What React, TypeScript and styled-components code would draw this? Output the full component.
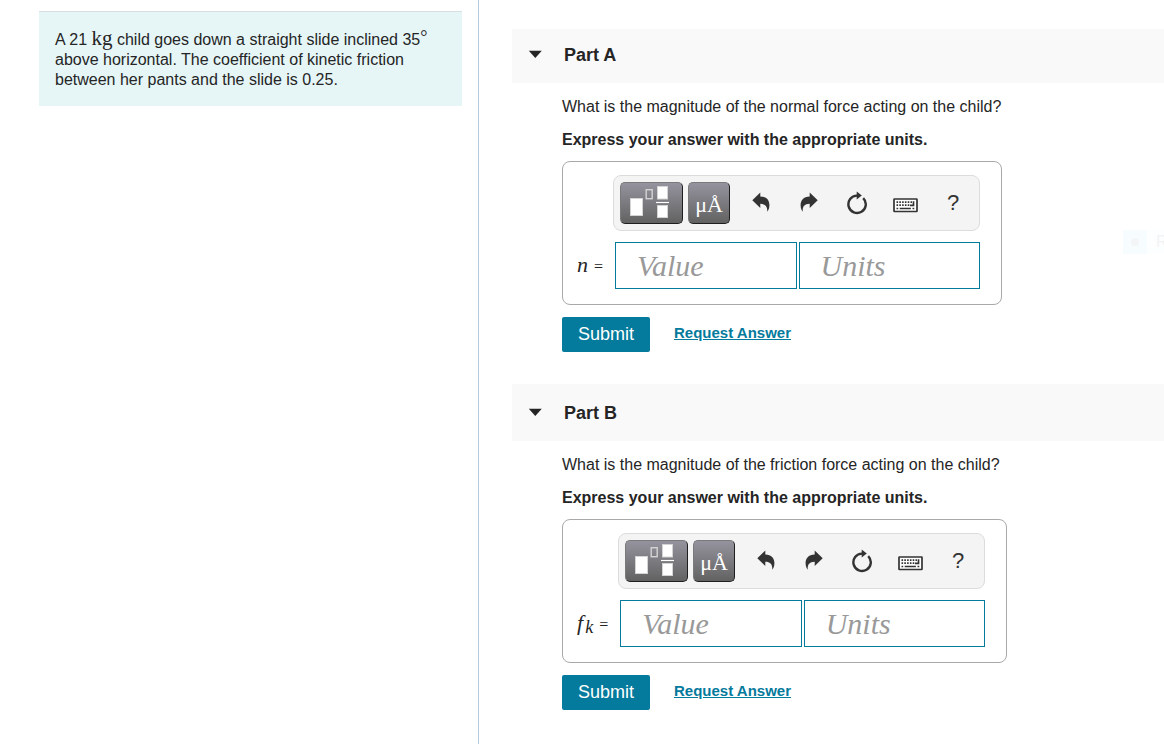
import React from "react";
import styled, { createGlobalStyle } from "styled-components";

const GlobalStyle = createGlobalStyle`
  *, *::before, *::after { box-sizing: border-box; }
  body {
    margin: 0;
    background: #fff;
    color: #252525;
    font: 16px/20px "Liberation Sans", Arial, sans-serif;
    overflow-x: hidden;
  }
  p { margin: 0; }
`;

const Page = styled.div`
  display: grid;
  grid-template-columns: minmax(0, 479fr) minmax(0, 685fr);
  min-height: 100vh;
`;

const ProblemPane = styled.aside`
  border-right: 1px solid #b8cbdc;
  padding: 11px 16px 0 39px;
`;

const ProblemCard = styled.div`
  border-top: 1px solid #d6e0e0;
  background: #e6f6f7;
  padding: 18px 16px 16px;
`;

const Unit = styled.span`
  font: 21px/16px "Liberation Serif", "Times New Roman", serif;
`;

const Degree = styled.span`
  font: 18px/12px "Liberation Serif", "Times New Roman", serif;
  vertical-align: 2px;
`;

const AnswerPane = styled.main`
  position: relative;
  padding: 29px 0 32px 33px;
`;

const Part = styled.section`
  & + & { margin-top: 32px; }
`;

const PartHeader = styled.header<{ $compact?: boolean }>`
  background: #f9f9f9;
  padding: ${(p) => (p.$compact ? 16 : 19)}px 16px 18px;
`;

const PartToggle = styled.button`
  display: flex;
  align-items: center;
  gap: 22px;
  border: 0;
  padding: 0;
  background: none;
  color: inherit;
  font: inherit;
`;

const PartTitle = styled.h2`
  margin: 0;
  font-size: 18px;
  line-height: 20px;
`;

const PartBody = styled.div`
  display: flex;
  flex-direction: column;
  align-items: flex-start;
  padding: 14px 16px 0 50px;
`;

const Instruction = styled.p`
  margin-top: 13px;
  font-weight: bold;
`;

const AnswerBox = styled.form`
  display: grid;
  grid-template-columns: auto auto;
  align-items: center;
  row-gap: 11px;
  column-gap: 10px;
  margin-top: 11px;
  border: 1px solid #a9a9a9;
  border-radius: 8px;
  padding: 13px 21px 15px 14px;
`;

const Toolbar = styled.div`
  grid-column: 2;
  display: flex;
  align-items: center;
  height: 56px;
  border: 1px solid #dcdcdc;
  border-radius: 8px;
  background: #f4f4f4;
  padding: 0 2px 0 6px;
`;

const PaletteButton = styled.button<{ $wide?: boolean }>`
  display: flex;
  align-items: center;
  justify-content: center;
  width: ${(p) => (p.$wide ? 63 : 42)}px;
  height: 42px;
  margin-right: ${(p) => (p.$wide ? 5 : 7)}px;
  border: 1px solid;
  border-color: #7a7a7a #1f1f1f #1f1f1f #7a7a7a;
  border-radius: 5px;
  padding: ${(p) => (p.$wide ? 0 : 4)}px 0 0;
  background: linear-gradient(#95939e, #626262);
  color: #fff;
  font: 22px/24px "Liberation Serif", "Times New Roman", serif;
`;

const ToolButton = styled.button`
  display: flex;
  align-items: center;
  justify-content: center;
  width: 48px;
  height: 42px;
  border: 0;
  padding: 0;
  background: none;
  color: #333;
  font: 22px/24px "Liberation Sans", Arial, sans-serif;
`;

const VariableLabel = styled.label`
  grid-column: 1;
  font: italic 22px/24px "Liberation Serif", "Times New Roman", serif;
  white-space: nowrap;
`;

const Subscript = styled.sub`
  margin-left: 2px;
  font-size: 18px;
  line-height: 0;
  vertical-align: -3px;
`;

const Equals = styled.span`
  margin-left: 6px;
  font: 16px/24px "Liberation Serif", "Times New Roman", serif;
`;

const Fields = styled.div`
  display: flex;
  gap: 2px;
  padding-left: 2px;
`;

const Field = styled.input`
  flex: 1 1 0;
  min-width: 0;
  width: 181px;
  height: 47px;
  border: 1px solid #047a9c;
  border-radius: 0;
  padding: 1px 21px 0;
  background: #fff;
  color: #252525;
  font: italic 30px/32px "Liberation Serif", "Times New Roman", serif;
  &::placeholder { color: #999; opacity: 1; }
`;

const Actions = styled.div`
  display: flex;
  align-items: center;
  gap: 24px;
  margin-top: 12px;
`;

const SubmitButton = styled.button`
  height: 35px;
  border: 0;
  border-radius: 2px;
  padding: 0 16px 2px;
  background: #047a9c;
  color: #fff;
  font: 18px/20px "Liberation Sans", Arial, sans-serif;
`;

const RequestLink = styled.a`
  color: #047a9c;
  font-size: 15px;
  font-weight: bold;
  line-height: 20px;
  padding-bottom: 4px;
`;

const FadingBadge = styled.div`
  position: absolute;
  top: 230px;
  right: 0;
  display: flex;
  width: 41px;
  height: 24px;
  overflow: hidden;
  background: #fcfeff;
  color: #f3f3f3;
  line-height: 24px;
`;

const BadgeDot = styled.span`
  display: flex;
  flex: 0 0 24px;
  align-items: center;
  justify-content: center;
  margin-right: 9px;
  background: #f7fcff;
  &::before {
    content: "";
    width: 8px;
    height: 8px;
    border-radius: 50%;
    background: #f3f5f6;
  }
`;

const CaretIcon = () => (
  <svg width="14" height="10" viewBox="0 0 14 10" aria-hidden="true">
    <path d="M.8.8h13L7.3 8z" fill="#252525" />
  </svg>
);

const TemplateIcon = () => (
  <svg width="43" height="34" viewBox="0 0 43 34" fill="#fff" stroke="#d4d4d4" aria-hidden="true">
    <rect x=".5" y="12.5" width="12" height="17" />
    <rect x="16.2" y="3.7" width="6" height="9" fill="none" strokeWidth="1.4" />
    <rect x="27.5" y=".5" width="10" height="12.5" />
    <rect x="27.5" y="19.5" width="10" height="12" />
    <path d="M26 16.5h13" stroke="#fff" strokeWidth="1.2" />
  </svg>
);

const UndoIcon = () => (
  <svg width="24" height="24" viewBox="0 0 24 24" fill="currentColor" aria-hidden="true">
    <path d="M3.3 9.2 11.3 1.5v4C17.6 5.5 20.6 9.6 20.4 14.5c-.1 2.8-1 5-2.2 6.2.5-5.2-1.8-7.9-6.9-7.9v4.2z" />
  </svg>
);

const RedoIcon = () => (
  <svg width="24" height="24" viewBox="0 0 24 24" fill="currentColor" aria-hidden="true">
    <path d="M20.7 9.2 12.7 1.5v4C6.4 5.5 3.4 9.6 3.6 14.5c.1 2.8 1 5 2.2 6.2-.5-5.2 1.8-7.9 6.9-7.9v4.2z" />
  </svg>
);

const ResetIcon = () => (
  <svg width="24" height="24" viewBox="0 0 24 24" aria-hidden="true">
    <path d="M18.2 7.1A8.7 8.7 0 1 1 12 4.6" fill="none" stroke="currentColor" strokeWidth="2.4" />
    <path d="M11.7.5 16.8 4.5 11.7 8.5z" fill="currentColor" />
  </svg>
);

const KeyboardIcon = () => (
  <svg width="25" height="24" viewBox="0 0 25 24" fill="none" stroke="currentColor" aria-hidden="true">
    <rect x="1" y="8" width="23" height="12.5" rx=".5" fill="#fff" strokeWidth="1.7" />
    <path d="M3.5 11.2H19M3.5 14.2H17.5" strokeWidth="1.7" strokeDasharray="1.6 1.2" />
    <path d="M20.5 10.3v4H17" strokeWidth="1.7" />
    <path d="M3.5 17.6h1.7M6.7 17.6h11.2M19.5 17.6h1.8" strokeWidth="1.5" />
  </svg>
);

interface QuestionProps {
  id: string;
  title: string;
  question: string;
  variable: React.ReactNode;
  compact?: boolean;
}

function Question({ id, title, question, variable, compact }: QuestionProps) {
  return (
    <Part>
      <PartHeader $compact={compact}>
        <PartToggle type="button" aria-expanded="true">
          <CaretIcon />
          <PartTitle>{title}</PartTitle>
        </PartToggle>
      </PartHeader>
      <PartBody>
        <p>{question}</p>
        <Instruction>Express your answer with the appropriate units.</Instruction>
        <AnswerBox id={`${id}-form`} onSubmit={(e) => e.preventDefault()}>
          <Toolbar role="toolbar" aria-label="Answer tools">
            <PaletteButton $wide type="button" aria-label="Templates"><TemplateIcon /></PaletteButton>
            <PaletteButton type="button">μÅ</PaletteButton>
            <ToolButton type="button" aria-label="Undo"><UndoIcon /></ToolButton>
            <ToolButton type="button" aria-label="Redo"><RedoIcon /></ToolButton>
            <ToolButton type="button" aria-label="Reset"><ResetIcon /></ToolButton>
            <ToolButton type="button" aria-label="Keyboard shortcuts"><KeyboardIcon /></ToolButton>
            <ToolButton type="button">?</ToolButton>
          </Toolbar>
          <VariableLabel htmlFor={`${id}-value`}>
            {variable}
            <Equals>=</Equals>
          </VariableLabel>
          <Fields>
            <Field id={`${id}-value`} placeholder="Value" />
            <Field aria-label="Units" placeholder="Units" />
          </Fields>
        </AnswerBox>
        <Actions>
          <SubmitButton type="submit" form={`${id}-form`}>Submit</SubmitButton>
          <RequestLink href="#">Request Answer</RequestLink>
        </Actions>
      </PartBody>
    </Part>
  );
}

export default function App() {
  return (
    <>
      <GlobalStyle />
      <Page>
        <ProblemPane>
          <ProblemCard>
            <p>
              A 21 <Unit>kg</Unit> child goes down a straight slide inclined 35<Degree>°</Degree> above
              horizontal. The coefficient of kinetic friction between her pants and the slide is 0.25.
            </p>
          </ProblemCard>
        </ProblemPane>
        <AnswerPane>
          <Question
            id="part-a"
            title="Part A"
            question="What is the magnitude of the normal force acting on the child?"
            variable="n"
            compact
          />
          <Question
            id="part-b"
            title="Part B"
            question="What is the magnitude of the friction force acting on the child?"
            variable={<>f<Subscript>k</Subscript></>}
          />
          <FadingBadge aria-hidden="true"><BadgeDot />R</FadingBadge>
        </AnswerPane>
      </Page>
    </>
  );
}
